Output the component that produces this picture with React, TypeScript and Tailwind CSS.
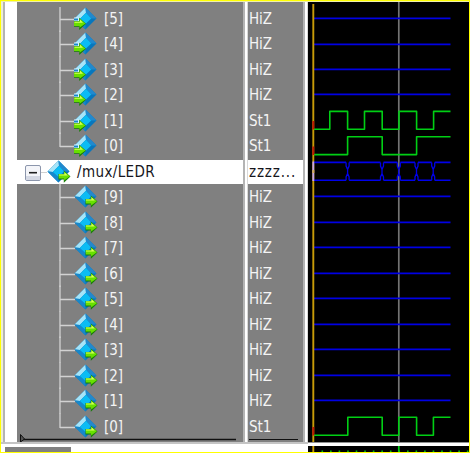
import React from "react";

type Kind = "in" | "out";
type Signal = { name: string; value: string; kind: Kind; root?: boolean };

const inputs: Signal[] = [5, 4, 3, 2, 1, 0].map((n) => ({
  name: `[${n}]`,
  value: n < 2 ? "St1" : "HiZ",
  kind: "in",
}));
const outputs: Signal[] = [9, 8, 7, 6, 5, 4, 3, 2, 1, 0].map((n) => ({
  name: `[${n}]`,
  value: n === 0 ? "St1" : "HiZ",
  kind: "out",
}));
const signals: Signal[] = [
  ...inputs,
  { name: "/mux/LEDR", value: "zzzz...", kind: "out", root: true },
  ...outputs,
];

function Gem({ kind }: { kind: Kind }) {
  return (
    <svg width="25" height="25" viewBox="0 0 25 25" className="block shrink-0">
      <path d="M11.5 .5L.5 11.5L11.5 22.5L22.5 11.5Z" fill="#0877bd" />
      <path d="M11.5 .5L.5 11.5L5.8 12L12 5.8Z" fill="#a5e4f8" />
      <path d="M11.5 .5L12 5.8L17.2 11.5L22.5 11.5Z" fill="#2189ce" />
      <path d="M.5 11.5L5.8 12L11.5 17L11.5 22.5Z" fill="#1688cb" />
      <path d="M12 5.8L17.2 11.5L11.5 17L5.8 12Z" fill="#0bbcf4" />
      {kind === "in" ? (
        <g>
          <path d="M0 10.5H5V14.5H0Z" fill="#d8f3ff" />
          <path d="M0 11.5H4V13.5H0Z" fill="#1688cb" />
          <path d="M0 14.3H5.2V10.8L12 16.8L5.2 23V19.7H0Z" fill="#187d08" />
          <path d="M0 14.6H5.5V11.6L11.5 16.5L5.5 20.8V18.9H0Z" fill="#68e000" />
          <path d="M.5 14.8H6V12.6L9 15.8H.5Z" fill="#d7ff58" />
        </g>
      ) : (
        <g>
          <path d="M11.5 14H16.8V10.5L23.5 16.5L16.8 22.8V19.6H11.5Z" fill="#187d08" />
          <path d="M11.8 14.3H17.1V11.4L23 16.3L17.1 20.6V18.6H11.8Z" fill="#68e000" />
          <path d="M12 14.6H17.5V12.3L20.8 15.6H12Z" fill="#d7ff58" />
        </g>
      )}
    </svg>
  );
}

function NameRow({ signal, index }: { signal: Signal; index: number }) {
  if (signal.root) {
    return (
      <div className="flex h-[25.48px] shrink-0 items-start pt-px">
        <div className="flex h-6 w-full items-start bg-white text-[#16161c]">
          <svg width="30" height="24" viewBox="17 160 30 24" className="block shrink-0">
            <path d="M41 172.5H49" stroke="#d0d0d0" />
            <rect x="25.5" y="165.5" width="15" height="15" rx="1.5" fill="#f4f5f9" stroke="#8c96ac" />
            <path d="M26 176H40V180H26Z" fill="#d5d9e4" />
            <path d="M29 172.7H37" stroke="#202020" strokeWidth="1.6" />
          </svg>
          <Gem kind="out" />
          <span className="ml-[5px] leading-[25px] tracking-[0.38px]">{signal.name}</span>
        </div>
      </div>
    );
  }
  const first = index === 0;
  const last = signal.name === "[0]";
  return (
    <div className="flex h-[25.48px] shrink-0 items-start">
      <svg width="57" height="25.48" viewBox="0 0 57 25.48" className="block shrink-0 overflow-visible">
        <path d={`M43 ${first ? 1 : -0.5}V${last ? 14 : 26}M43 13.5H58`} fill="none" stroke="#d2d2d2" strokeWidth="1.3" />
      </svg>
      <div className="pt-px">
        <Gem kind={signal.kind} />
      </div>
      <span className="ml-[5px] leading-[26px]">{signal.name}</span>
    </div>
  );
}

function Divider() {
  return <div className="h-full w-[5px] shrink-0 border-l-2 border-r border-l-[#b4b4b4] border-r-[#d8d8d8] bg-white" />;
}

const flatRows = [0, 1, 2, 3, 7, 8, 9, 10, 11, 12, 13, 14, 15];
const edges = [347.6, 382, 398.8, 416.5, 433.2];

function busPath() {
  const starts = [314, ...edges];
  return starts
    .map((start, i) => {
      const a = i === 0 ? 314 : start + 1.5;
      const b = i === edges.length ? 450.5 : edges[i] - 1.5;
      return `M${a} 162.4H${b}M${a} 180.3H${b}`;
    })
    .join("");
}

function Waves() {
  return (
    <svg width="161" height="440" viewBox="308 2 161 440" className="block bg-black">
      <path d="M398.8 2V442" stroke="#737373" strokeWidth="1.7" />
      {flatRows.map((row) => (
        <path key={row} d={`M314 ${Math.floor(18.6 + row * 25.46) + 0.4}H450.5`} stroke="#0000e4" strokeWidth="1.6" />
      ))}
      <path d="M313.3 4V442" stroke="#c89b08" strokeWidth="1.9" />
      <g fill="none" stroke="#00cf14" strokeWidth="1.6" strokeLinejoin="round">
        <path d="M314 129.3H329.8V111.4H347.6V129.3H364.5V111.4H382.2V129.3H399V111.4H416.6V129.3H433.6V111.4H450.5" />
        <path d="M314 154.6H347.6V136.8H382.2V154.6H416.6V136.8H450.5" />
        <path d="M314 435.2H347.8V417.3H382.2V435.2H398.8V417.3H416.6V435.2H433.4V417.3H450.5" />
      </g>
      <path d={busPath()} stroke="#0000ea" strokeWidth="1.6" />
      {edges.map((x) => (
        <path
          key={x}
          d={`M${x - 1.5} 162.4V166L${x} 169.5V173.5L${x - 1.5} 177V180.3M${x + 1.5} 162.4V166L${x} 169.5M${x} 173.5L${x + 1.5} 177V180.3`}
          fill="none"
          stroke="#0000ea"
          strokeWidth="1.3"
        />
      ))}
      <path d="M313.3 121V129.5M313.3 146.5V155M313.3 427V435.5" stroke="#bd1600" strokeWidth="1.9" />
      <path d="M313.3 161.5V181" stroke="#c5a5e8" strokeWidth="1.9" />
      <path d="M313.3 170V173" stroke="#d4ad58" strokeWidth="1.9" />
    </svg>
  );
}

export default function App() {
  return (
    <div className="flex h-[453px] w-[470px] flex-col overflow-hidden border border-[#ffff00] bg-white font-['DejaVu_Sans_Condensed','DejaVu_Sans',sans-serif] text-[15px] text-[#f4f4f4]">
      <div className="h-px shrink-0 bg-[#eeeeb0]" />
      <div className="flex h-[440px] shrink-0">
        <div className="flex w-4 shrink-0 bg-white">
          <div className="w-[2px] bg-[#eeeed4]" />
          <div className="w-[2px] bg-[#b4b4b4]" />
        </div>
        <div className="flex w-[226px] shrink-0 flex-col bg-[#808080] pt-1">
          {signals.map((signal, index) => (
            <NameRow key={index} signal={signal} index={index} />
          ))}
          <svg width="226" height="10" viewBox="17 434 226 10" className="-mt-[5px] block shrink-0">
            <path d="M21 439.5H236" stroke="#101010" strokeWidth="1.7" />
            <path d="M20.5 434.5V442L24.5 439Z" fill="#555" stroke="#111" />
          </svg>
        </div>
        <Divider />
        <div className="flex w-[55px] shrink-0 flex-col bg-[#808080] pt-1">
          {signals.map((signal, index) => (
            <div key={index} className="h-[25.48px] shrink-0 pt-px">
              <div
                className={
                  signal.root
                    ? "h-6 bg-white pl-px leading-[25px] tracking-[0.85px] text-[#16161c]"
                    : "h-6 pl-px leading-[24px] tracking-[-0.1px]"
                }
              >
                {signal.value}
              </div>
            </div>
          ))}
          <div className="ml-px h-[1.5px] w-[49px] shrink-0 bg-[#101010]" />
        </div>
        <Divider />
        <Waves />
      </div>
      <div className="flex h-[10px] shrink-0">
        <div className="w-[307px] border-t-2 border-[#c4c4c4] bg-white pl-1 pt-[3px]">
          <div className="h-[6px] w-[66px] bg-[#808080]" />
        </div>
        <div className="w-[161px] bg-black">
          <div className="h-1 border-t border-[#909090] bg-white" />
          <svg width="161" height="6" viewBox="308 446 161 6" className="block">
            <path d="M313.3 446V452" stroke="#c89b08" strokeWidth="1.9" />
            <path d="M398.8 446V452" stroke="#00cf14" strokeWidth="1.7" />
            <path d="M321.5 451.2H469" stroke="#00c014" strokeWidth="1.6" strokeDasharray="1.6 6.95" />
          </svg>
        </div>
      </div>
    </div>
  );
}
